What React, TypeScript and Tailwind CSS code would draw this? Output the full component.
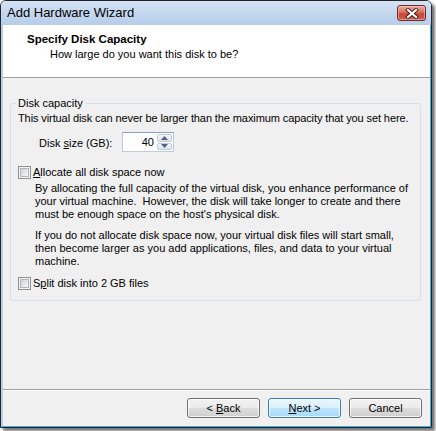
import React from "react";

function CheckBox() {
  return (
    <div className="w-[13px] h-[13px] border border-[#8f8f8f] bg-[#f4f4f4] p-[1px] shrink-0">
      <div className="w-full h-full border border-[#b1b5ba] bg-[linear-gradient(135deg,#cdd1d7,#f7f7f7)]" />
    </div>
  );
}

function Btn({ children, primary }: { children: React.ReactNode; primary?: boolean }) {
  return (
    <div
      className={
        "w-[73px] h-[20px] rounded-[3px] border flex items-center justify-center text-[11px] leading-[13px] whitespace-pre shadow-[inset_0_0_0_1px_rgba(255,255,255,0.75)] " +
        (primary
          ? "border-[#3c7fb1] bg-[linear-gradient(#eaf6fd_0%,#d9f0fc_50%,#bee6fd_50%,#a7d9f5_100%)]"
          : "border-[#707070] bg-[linear-gradient(#f2f2f2_0%,#ebebeb_50%,#dddddd_50%,#cfcfcf_100%)]")
      }
    >
      {children}
    </div>
  );
}

export default function App() {
  return (
    <div className="w-[436px] h-[431px] bg-white text-black font-['Liberation_Sans',Arial,sans-serif]">
      <div className="w-[432px] h-[428px] flex flex-col border border-[#262626] rounded-t-[6px] overflow-hidden shadow-[3px_3px_3px_rgba(0,0,0,0.55)]">
        {/* Title bar */}
        <div className="h-[24px] shrink-0 flex items-center justify-between pl-[6px] pr-[5px] bg-[linear-gradient(#d3e2f4,#b6cde9)]">
          <span className="text-[13px] leading-[16px]">Add Hardware Wizard</span>
          <div className="w-[29px] h-[16px] rounded-[3px] border border-[#6e2b27] bg-[linear-gradient(#eaaa9c_0%,#d8735f_45%,#c4463a_55%,#cf6253_100%)] flex items-center justify-center shadow-[inset_0_0_0_1px_rgba(255,220,210,0.45)]">
            <svg width="14" height="11" viewBox="0 0 14 11">
              <path d="M3 2 L11 9 M11 2 L3 9" stroke="#4a1b18" strokeWidth="4" strokeLinecap="square" />
              <path d="M3 2 L11 9 M11 2 L3 9" stroke="#ffffff" strokeWidth="2.2" strokeLinecap="square" />
            </svg>
          </div>
        </div>

        {/* Client */}
        <div className="flex-1 flex flex-col border-l-2 border-r border-b border-l-[#b7cee9] border-r-[#38b0e4] border-b-[#38b0e4]">
          {/* Header */}
          <div className="h-[53px] shrink-0 bg-white border-b border-[#a0a0a0] pt-[7px] pl-[24px]">
            <div className="text-[11.5px] leading-[15px] font-bold">Specify Disk Capacity</div>
            <div className="text-[11px] leading-[15px] pl-[23px]">How large do you want this disk to be?</div>
          </div>

          {/* Body */}
          <div className="flex-1 flex flex-col bg-[#f0f0f0]">
            <fieldset className="mt-[18px] ml-[7px] mr-[9px] border border-[#d5dfe5] rounded-[3px] px-[7px] pb-[10px] text-[11px]">
              <legend className="leading-[15px] px-[2px] -ml-[2px]">Disk capacity</legend>
              <div className="leading-[14px] whitespace-nowrap tracking-[-0.1px]">
                This virtual disk can never be larger than the maximum capacity that you set here.
              </div>
              <div className="mt-[7px] h-[20px] flex items-center">
                <div className="w-[104px] pl-[21px] pt-[2px]">
                  Disk <span className="underline">s</span>ize (GB):
                </div>
                <div className="w-[52px] h-[20px] flex items-center border border-[#b7cbe2] border-t-[#86a3c7] bg-white">
                  <div className="flex-1 text-right pr-[3px] leading-[13px]">40</div>
                  <div className="w-[16px] h-full flex flex-col gap-px py-px pr-px">
                    <div className="flex-1 border border-[#c3cad3] rounded-[2px] bg-[linear-gradient(#f6f6f6,#dfe3e8)] flex items-center justify-center">
                      <svg width="7" height="4" viewBox="0 0 7 4"><path d="M0 4 L3.5 0 L7 4 Z" fill="#4d6185" /></svg>
                    </div>
                    <div className="flex-1 border border-[#c3cad3] rounded-[2px] bg-[linear-gradient(#f6f6f6,#dfe3e8)] flex items-center justify-center">
                      <svg width="7" height="4" viewBox="0 0 7 4"><path d="M0 0 L7 0 L3.5 4 Z" fill="#4d6185" /></svg>
                    </div>
                  </div>
                </div>
              </div>

              <div className="mt-[14px] h-[13px] flex items-center gap-[2px]">
                <CheckBox />
                <span className="leading-[13px]"><span className="underline">A</span>llocate all disk space now</span>
              </div>

              <div className="mt-[3px] pl-[17px] leading-[13px] whitespace-nowrap">
                By allocating the full capacity of the virtual disk, you enhance performance of
                <br />
                your virtual machine.{"\u00a0"} However, the disk will take longer to create and there
                <br />
                must be enough space on the host's physical disk.
              </div>
              <div className="mt-[8px] pl-[17px] leading-[13px] whitespace-nowrap">
                If you do not allocate disk space now, your virtual disk files will start small,
                <br />
                then become larger as you add applications, files, and data to your virtual
                <br />
                machine.
              </div>

              <div className="mt-[9px] h-[13px] flex items-center gap-[2px]">
                <CheckBox />
                <span className="leading-[13px]">S<span className="underline">p</span>lit disk into 2 GB files</span>
              </div>
            </fieldset>

            {/* Footer */}
            <div className="mt-auto h-[37px] shrink-0 border-t border-[#a0a0a0] shadow-[inset_0_1px_0_#ffffff] flex justify-end items-start gap-[8px] pt-[8px] pr-[8px]">
              <Btn>{"< "}<span className="underline">B</span>ack</Btn>
              <Btn primary><span className="underline">N</span>ext &gt;</Btn>
              <Btn>Cancel</Btn>
            </div>
          </div>
        </div>
      </div>
    </div>
  );
}
